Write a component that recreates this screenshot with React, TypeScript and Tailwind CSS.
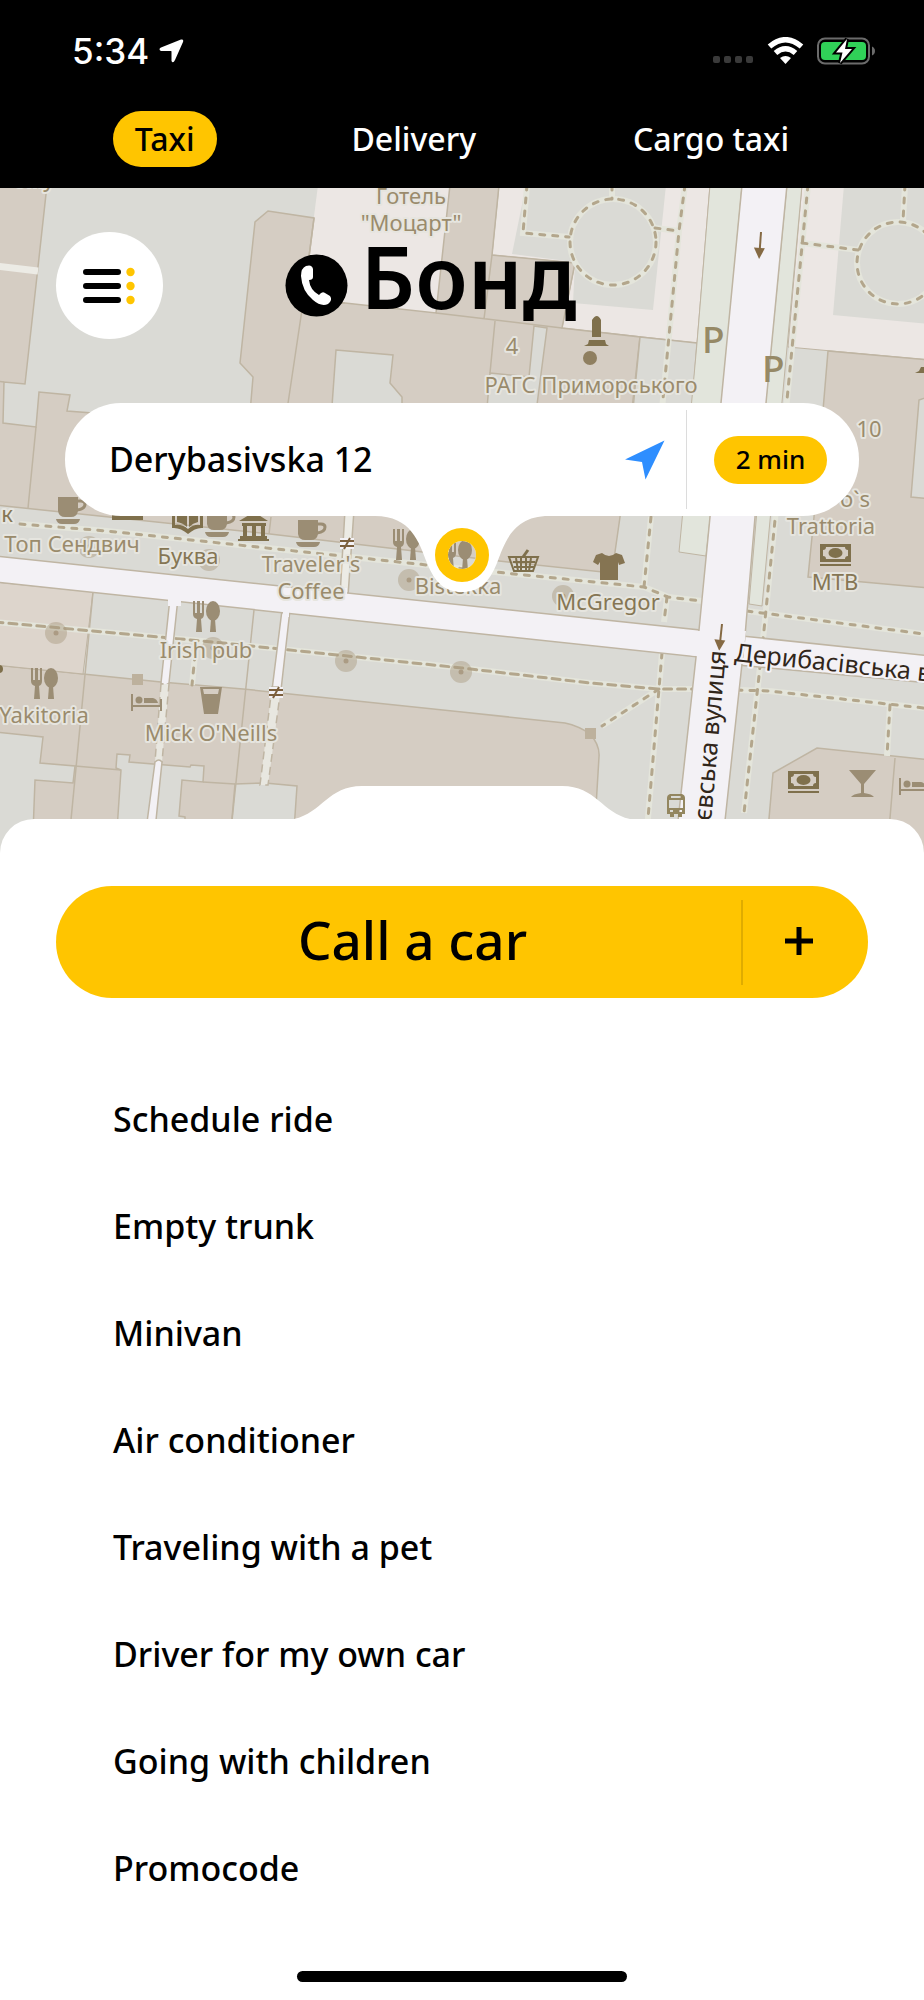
import React from 'react';

const TABS = ['Taxi', 'Delivery', 'Cargo taxi'];

const OPTIONS = [
  'Schedule ride',
  'Empty trunk',
  'Minivan',
  'Air conditioner',
  'Traveling with a pet',
  'Driver for my own car',
  'Going with children',
  'Promocode',
];

const GROUND = '#dadad5';
const BUILDING = '#d5cdc3';
const EDGE = '#bfb5a3';
const PLAZA = '#ece7e4';
const VERGE = '#e2e5dc';
const ROAD = '#f3f1f5';
const MARK = '#9b8d74';
const MARK_DARK = '#7f704c';

const BUILDINGS = [
  'M-5 185L47 185L38 267L25 384L4 382L3 423L36 427L39 392L70 395L67 411L249 425L253 377L240 363L255 222L268 211L314 218L303 303L345 303L436 313L450 185L499 185L492 255L575 263L562 328L640 337L620 517L612 573L499 561L270 534L-5 505Z',
  'M828 351L930 360V588L808 577L814 517Z',
  'M-5 665L83 674L161 682L243 689L462 712L565 723Q579 726 590 734Q600 745 599 757L594 840H-5Z',
  'M768 830L773 773L817 748L930 760V870H766Z',
];

const YARDS = [
  'M336 350L393 355L390 383L402 397V420H331Z',
  'M490 373L529 377L534 326L547 328L535 420H486Z',
  'M640 337L697 343L690 440H630Z',
  'M919 400L911 497L930 499V396Z',
  'M-5 732L43 737L40 763L75 766L73 783L35 780L32 860H-5Z',
  'M117 830L121 770L116 768L117 754L130 755L129 762L190 767L191 765L204 766L203 782L182 780L179 816L185 817V830Z',
  'M235 784L265 783L297 786L294 830H231Z',
];

const SEAMS = [
  'M36 427L28 508',
  'M4 382L-5 381',
  'M314 218L303 303L287 410',
  'M303 303L345 303',
  'M492 255L484 319M436 313L562 328M495 321L490 373',
  'M271 517L269 534',
  'M93 592L70 830',
  'M254 610L231 830',
  'M75 766L121 770M203 782L235 784',
  'M895 758L889 830',
];

const PATHS = [
  'M527 185L523 233L569 237',
  'M612 185V199',
  'M655 228L679 231',
  'M685 185L679 231L661 420',
  'M808 185L786 410L764 630L744 813',
  'M802 243L858 250',
  'M905 185L903 221',
  'M20 524L107 531L427 565L495 572L644 587L668 597L702 601',
  'M651 517L644 587M667 597L664 622',
  'M747 611L924 634',
  'M659 689L602 726',
  'M662 653L647 830',
  'M737 690L769 691L924 708',
  'M890 705L887 756',
  'M195 655L192 685',
];

const DISCS = [
  [56, 633],
  [346, 661],
  [461, 672],
  [213, 648],
  [89, 547],
  [209, 560],
  [409, 580],
  [563, 596],
];

type Label = { text: string; x: number; y: number; color?: string };

const LABELS: Label[] = [
  { text: 'ому', x: 34, y: 187 },
  { text: 'Готель', x: 411, y: 204 },
  { text: '"Моцарт"', x: 411, y: 231 },
  { text: '4', x: 512, y: 354 },
  { text: 'РАГС Приморського', x: 591, y: 393 },
  { text: '10', x: 869, y: 437 },
  { text: 'o`s', x: 855, y: 507 },
  { text: 'Trattoria', x: 831, y: 534 },
  { text: 'МТВ', x: 835, y: 590, color: '#857654' },
  { text: 'McGregor', x: 608, y: 610, color: '#857654' },
  { text: 'Bistekka', x: 458, y: 594 },
  { text: 'к', x: 7, y: 522, color: '#857654' },
  { text: 'Топ Сендвич', x: 72, y: 552 },
  { text: 'Буква', x: 188, y: 564, color: '#857654' },
  { text: "Traveler's", x: 311, y: 572 },
  { text: 'Coffee', x: 311, y: 599 },
  { text: 'Irish pub', x: 206, y: 658 },
  { text: 'Yakitoria', x: 44, y: 723 },
  { text: "Mick O'Neills", x: 211, y: 741 },
];

type MarkProps = { x: number; y: number };

const Cup: React.FC<MarkProps> = ({ x, y }) => (
  <g transform={`translate(${x} ${y})`} fill={MARK}>
    <path d="M2 0H22V14Q21 20 15 20H9Q3 20 2 14Z" />
    <path d="M22 4H25Q29 4 29 7Q29 12 21 13" fill="none" stroke={MARK} strokeWidth="3" />
    <path d="M0 22H24Q23 27 18 27H6Q1 27 0 22Z" />
  </g>
);

const Cutlery: React.FC<MarkProps> = ({ x, y }) => (
  <g transform={`translate(${x} ${y})`} fill={MARK}>
    <path d="M0 0H2V12H4V0H7V12H9V0H11V13Q11 17 8 18L9 31H3L4 18Q0 17 0 13Z" />
    <ellipse cx="20" cy="10" rx="7" ry="10" />
    <path d="M18 18H22L23 31H17Z" />
  </g>
);

const Banknote: React.FC<MarkProps> = ({ x, y }) => (
  <g transform={`translate(${x} ${y})`} fill={MARK_DARK}>
    <path
      fillRule="evenodd"
      d="M0 0H31V18H0ZM6 3Q6 6 3 6V12Q6 12 6 15H25Q25 12 28 12V6Q25 6 25 3Z"
    />
    <ellipse cx="15.500" cy="9" rx="7" ry="5" />
    <path d="M0 20H31V22H0Z" />
  </g>
);

const Bed: React.FC<MarkProps> = ({ x, y }) => (
  <g transform={`translate(${x} ${y})`} fill={MARK}>
    <path d="M0 0H2V11H29V5H31V17H29V13H2V17H0Z" />
    <circle cx="8" cy="6" r="3.500" />
    <path d="M13 4H22Q26 5 27 9H13Z" />
  </g>
);

const Barrier: React.FC<MarkProps> = ({ x, y }) => (
  <g transform={`translate(${x} ${y})`}>
    <path d="M0 0H14V11H0Z" fill={ROAD} />
    <path d="M0 3H14M0 8H14M10 0L4 11" stroke="#7c5f3c" strokeWidth="2" />
  </g>
);

const OneWay: React.FC<{ at: string }> = ({ at }) => (
  <g transform={at}>
    <path d="M0 0V18" stroke="#856a43" strokeWidth="2" />
    <path d="M-6 16H5L0 27Z" fill="#856a43" />
  </g>
);

const CityMap: React.FC = () => (
  <svg
    className="absolute inset-x-0 top-0 w-full h-[calc(100%+40px)]"
    viewBox="0 188 924 671"
    preserveAspectRatio="xMidYMin slice"
    aria-hidden="true"
  >
    <rect x="-10" y="180" width="950" height="700" fill={GROUND} />
    <g fill={PLAZA}>
      <path d="M318 185H450L436 313L303 303Z" />
      <path d="M499 185H710L697 343L562 328L575 263L492 255Z" stroke={EDGE} strokeWidth="1" />
      <path d="M802 185H930V360L788 347Z" stroke={EDGE} strokeWidth="1" />
    </g>
    <g fill={GROUND}>
      <path d="M526 185L512 254L575 262L573 303L653 310L666 185Z" />
      <path d="M844 185L833 315L930 324V185Z" />
    </g>
    <g fill={BUILDING} stroke={EDGE} strokeWidth="1.500">
      {BUILDINGS.map((d) => (
        <path key={d} d={d} />
      ))}
    </g>
    <path d="M-5 582L93 592L83 674L-5 665Z" fill="#ddd5cc" stroke={EDGE} />
    <g fill={GROUND} stroke={EDGE} strokeWidth="1.500">
      {YARDS.map((d) => (
        <path key={d} d={d} />
      ))}
    </g>
    <g fill="none" stroke={EDGE} strokeWidth="1.500">
      {SEAMS.map((d) => (
        <path key={d} d={d} />
      ))}
    </g>
    <g fill={VERGE} stroke={EDGE}>
      <path d="M710 185H742L722 402L720 420H690L697 343Z" />
      <path d="M787 185H802L782 402L780 420H764Z" />
      <path d="M683 510L679 552L706 556L711 510ZM757 510L749 604L762 606L771 510Z" />
    </g>

    {/* footways */}
    <g fill="none" stroke="#e4e5db" strokeWidth="6">
      <path d="M-5 266L38 271" stroke="#ecebe5" strokeWidth="7" />
      {PATHS.map((d) => (
        <path key={d} d={d} />
      ))}
      <path d="M-5 622L213 642L462 668L590 683L659 689H692" />
      <circle cx="613" cy="242" r="43" />
      <circle cx="898" cy="263" r="41" />
    </g>
    <g fill="none" stroke="#b3a68c" strokeWidth="3" strokeDasharray="5 8" strokeLinecap="round">
      {PATHS.map((d) => (
        <path key={d} d={d} />
      ))}
      <path d="M-5 622L213 642L462 668L590 683L659 689H692" strokeDasharray="8 6" />
      <circle cx="613" cy="242" r="43" />
      <circle cx="898" cy="263" r="41" />
    </g>

    {/* streets */}
    <g fill={ROAD} stroke={EDGE} strokeWidth="1.500">
      <path d="M345 510H354L348 596H340Z" fill="#ecebe5" />
      <path d="M170 598H178L169 683Q165 687 161 683Z" />
      <path d="M161 684L155 762H162L169 684Z" fill="#e8e7e0" strokeDasharray="8 5" />
      <path d="M155 762Q159 758 162 762L155 830H146Z" />
      <path d="M282 610H290L281 690H272Z" />
      <path d="M272 687L260 785H268L281 687Z" fill="#e8e7e0" strokeDasharray="8 5" />
      <path d="M-5 556L700 630L698 657L-5 582Z" />
      <path d="M742 636L930 656V683L738 665Z" />
      <path d="M742 185H787L755 517L745 636L724 830H677L699 630L710 517Z" />
    </g>
    <path d="M690 631H746L742 664L690 655ZM168 596H181V606H168ZM283 606H289V617H283ZM342 588H347V597H342Z" fill={ROAD} />

    {DISCS.map(([cx, cy]) => (
      <g key={`${cx}-${cy}`} fill="#a8987f">
        <circle cx={cx} cy={cy} r="11" opacity="0.45" />
        <circle cx={cx} cy={cy} r="2.500" opacity="0.9" />
      </g>
    ))}
    <path d="M132 674H143V685H132ZM585 728H596V739H585Z" fill="#bdb19d" />
    <circle cx="590" cy="358" r="7" fill="#8f7f60" />
    <circle cx="-1" cy="669" r="4" fill={MARK_DARK} />

    <Cup x={56} y={497} />
    <Cup x={205} y={510} />
    <Cup x={296} y={520} />
    <Cutlery x={193} y={601} />
    <Cutlery x={393} y={529} />
    <Cutlery x={31} y={668} />
    <Cutlery x={445} y={540} />
    <Banknote x={820} y={544} />
    <Banknote x={788} y={771} />
    <Bed x={131} y={694} />
    <Bed x={899} y={778} />
    <Barrier x={340} y={538} />
    <Barrier x={269} y={687} />
    <OneWay at="translate(761 232) rotate(4)" />
    <OneWay at="translate(722 624) rotate(6)" />

    <path d="M112 515H143V520H112Z" fill={MARK_DARK} />
    {/* bookshop */}
    <path
      d="M172 505V528Q180 527 188 534Q196 527 203 528V505L200 504V525Q194 524 188 529Q182 524 175 525V504Z"
      fill={MARK_DARK}
    />
    <path d="M177 505L187 510V527Q183 523 177 522ZM198 505L189 510V527Q193 523 198 522Z" fill={MARK_DARK} />
    {/* museum */}
    <path
      d="M239 521L254 512L268 521ZM242 523H266V526H242ZM243 526H247V536H243ZM252 526H256V536H252ZM261 526H265V536H261ZM240 536H267V539H240ZM238 539H269V541H238Z"
      fill={MARK_DARK}
    />
    {/* grocery */}
    <g fill="none" stroke={MARK_DARK} strokeWidth="2">
      <path d="M509 557H538L533 571H514ZM513 562H535M514 567H534M516 558L518 571M521 558V571M526 558V571M531 558L529 571" />
      <path d="M523 557L528 550" strokeWidth="3" />
    </g>
    {/* clothes */}
    <path
      d="M602 553Q609 559 616 553L622 555L625 563L619 565L618 562V580H600V562L598 565L593 562L596 555Z"
      fill="#857452"
    />
    {/* beer */}
    <path fillRule="evenodd" d="M200 687H222L218 714H204ZM203 689L204 694H218L219 689Z" fill={MARK} />
    {/* bar */}
    <path d="M849 770H876L864 784V793Q872 794 874 797H851Q853 794 861 793V784Z" fill={MARK} />
    {/* bus stop */}
    <path
      fillRule="evenodd"
      d="M670 794H682Q685 795 685 798V814H682V817H678V814H674V817H670V814H667V798Q667 795 670 794ZM671 796V798H681V796ZM669 800V808H683V800ZM670 810V812H673V810ZM679 810V812H682V810Z"
      fill="#93865f"
    />
    {/* monument */}
    <path
      d="M592 320Q597 312 601 320V337H592ZM589 340H605L606 344L609 346H584L588 344ZM921 367H930V373H915L919 371Z"
      fill={MARK_DARK}
    />

    <g fontFamily="'Noto Sans', sans-serif" fontWeight="400" strokeLinejoin="round" paintOrder="stroke">
      <g fontSize="22" textAnchor="middle" stroke="#e6e5df" strokeWidth="4">
        {LABELS.map((label) => (
          <text key={label.text} x={label.x} y={label.y} fill={label.color ?? '#9a8b6c'}>
            {label.text}
          </text>
        ))}
      </g>
      <g fontSize="37" fontWeight="500" fill="#968966">
        <text x="702" y="353">P</text>
        <text x="762" y="382">P</text>
      </g>
      <g fontSize="25" fill="#31261a" stroke={ROAD} strokeWidth="4">
        <text transform="translate(734 661) rotate(6)">Дерибасівська вулиця</text>
        <text transform="translate(726 651) rotate(-85)" textAnchor="end">
          Рішельєвська вулиця
        </text>
      </g>
    </g>
  </svg>
);

const StatusBar: React.FC = () => (
  <div className="flex items-center justify-between pl-[72px] pr-12 pt-[30px] pb-[39px]">
    <div className="flex items-center gap-2.5">
      <span className="font-['Inter',sans-serif] font-medium text-[35px] leading-[42px]">5:34</span>
      <svg width="25" height="24" viewBox="0 0 25 24" fill="currentColor" aria-hidden="true">
        <path d="M22 .5Q25 0 24 3L16 21Q14 25 12.500 22V12.500Q12.500 12 12 12H2Q-1 10 2 8.500Z" />
      </svg>
    </div>
    <svg width="164" height="28" viewBox="0 0 164 28" aria-hidden="true">
      <g fill="#3a3a3a">
        <rect x="1" y="19" width="7" height="7" rx="2" />
        <rect x="12" y="19" width="7" height="7" rx="2" />
        <rect x="23" y="19" width="7" height="7" rx="2" />
        <rect x="34" y="19" width="7" height="7" rx="2" />
      </g>
      <g fill="none" stroke="#fff" strokeWidth="5.500">
        <path d="M57.500 9.500Q73.500 -4 89.500 9.500" />
        <path d="M63.500 16Q73.500 7.500 83.500 16" />
      </g>
      <path d="M68 21Q73.500 17 79 21L73.500 27Z" fill="#fff" />
      <rect x="106" y="1.500" width="51" height="25" rx="7" fill="none" stroke="#6b6b6b" strokeWidth="2" />
      <rect x="109" y="5" width="45" height="18" rx="4" fill="#30d158" />
      <path d="M160 9.500Q163 11 163 14T160 18.500Z" fill="#6b6b6b" />
      <path
        d="M135 2L124 15.500H130.500L128 26L140 12H133Z"
        fill="#fff"
        stroke="#000"
        strokeWidth="4"
        paintOrder="stroke"
      />
    </svg>
  </div>
);

const Tabs: React.FC = () => (
  <nav className="flex items-center justify-evenly pb-[21px]">
    {TABS.map((tab, index) => (
      <button
        key={tab}
        type="button"
        className={
          index === 0
            ? 'h-14 px-[22px] rounded-full bg-[#ffc500] text-black text-[32px]'
            : 'h-14 px-[22px] rounded-full text-white text-[32px]'
        }
      >
        {tab}
      </button>
    ))}
  </nav>
);

const AddressCard: React.FC = () => (
  <div className="relative mx-[65px] mt-16 h-[113px] flex items-center rounded-[56px] bg-white">
    <input
      type="text"
      aria-label="Pickup address"
      defaultValue="Derybasivska 12"
      className="flex-1 min-w-0 pl-11 text-[34px] text-black bg-transparent outline-none"
    />
    <button type="button" aria-label="Use my location" className="mr-[21px]">
      <svg width="40" height="40" viewBox="0 0 40 40" aria-hidden="true">
        <path d="M39.500 .5L0 19.500L17 22L20.500 39.500Z" fill="#2e8eff" />
      </svg>
    </button>
    <div className="w-px h-[99px] bg-[#dcdcdc]"></div>
    <button type="button" className="mx-[27px] mr-8 w-[113px] h-12 rounded-full bg-[#ffc500] text-[26px]">
      2 min
    </button>

    <svg
      className="absolute left-1/2 top-full -translate-x-1/2 -mt-px"
      width="174"
      height="78"
      viewBox="0 0 174 78"
      aria-hidden="true"
    >
      <path
        fillRule="evenodd"
        d="M0 0H174V1C138 1 130 27 122 48C114 68 104 77 87 77S60 68 52 48C44 27 36 1 0 1ZM87 26A14 14 0 1 0 87 54A14 14 0 1 0 87 26Z"
        fill="#fff"
      />
      <circle cx="87" cy="40" r="20.500" fill="none" stroke="#ffc500" strokeWidth="13" />
    </svg>
  </div>
);

const Logo: React.FC = () => (
  <div className="flex items-center justify-center gap-3 mr-[62px]">
    <svg width="63" height="63" viewBox="0 0 63 63" aria-hidden="true">
      <circle cx="31.500" cy="31.500" r="31" />
      <path
        d="M21 12Q27 10 28 15V23Q28 26 24 26Q25 36 34 41Q37 37 40 39L45 42Q48 46 43 50Q36 53 28 46Q17 37 16 22Q16 14 21 12Z"
        fill="#fff"
      />
    </svg>
    <span className="pb-5 font-semibold text-[86px] leading-[87px]">Бонд</span>
  </div>
);

const MapSection: React.FC = () => (
  <section className="relative pt-11 pb-[303px]">
    <CityMap />
    <div className="relative px-14 grid grid-cols-[107px_1fr_107px] items-center">
      <button
        type="button"
        aria-label="Menu"
        className="size-[107px] rounded-full bg-white flex items-center justify-center"
      >
        <svg width="54" height="38" viewBox="0 0 54 38" aria-hidden="true">
          <path d="M3 5H35M3 19H35M3 33H35" stroke="#000" strokeWidth="6" strokeLinecap="round" />
          <g fill="#ffc500">
            <circle cx="47.500" cy="5" r="4.200" />
            <circle cx="47.500" cy="19" r="4.200" />
            <circle cx="47.500" cy="33" r="4.200" />
          </g>
        </svg>
      </button>
      <Logo />
    </div>
    <AddressCard />
  </section>
);

const OrderSheet: React.FC = () => (
  <main className="relative rounded-t-[34px] bg-white pt-[67px]">
    <svg
      className="absolute left-1/2 bottom-full -translate-x-1/2"
      width="336"
      height="33"
      viewBox="0 0 336 33"
      aria-hidden="true"
    >
      <path d="M0 33C28 27 34 0 68 0H268C302 0 308 27 336 33Z" fill="#fff" />
    </svg>

    <div className="mx-14 h-[112px] flex items-center rounded-full bg-[#ffc500]">
      <button type="button" className="flex-1 h-full pl-7 pb-1 text-[53px]">
        Call a car
      </button>
      <div className="w-0.5 h-[85px] bg-[#dfac00]"></div>
      <button
        type="button"
        aria-label="Add option"
        className="w-[125px] h-full pr-3.5 pb-0.5 flex items-center justify-center"
      >
        <svg width="28" height="28" viewBox="0 0 28 28" aria-hidden="true">
          <path d="M14 0V28M0 14H28" stroke="#000" strokeWidth="5" />
        </svg>
      </button>
    </div>

    <ul className="mt-[68px]">
      {OPTIONS.map((option) => (
        <li key={option}>
          <button type="button" className="w-full h-[107px] px-[113px] text-left text-[34px]">
            {option}
          </button>
        </li>
      ))}
    </ul>

    <div className="mt-[49px] mb-[18px] mx-auto w-[330px] h-[11px] rounded-full bg-black"></div>
  </main>
);

export default function App() {
  return (
    <div className="overflow-hidden bg-white text-black font-medium font-['Noto_Sans',sans-serif]">
      <header className="bg-black text-white">
        <StatusBar />
        <Tabs />
      </header>
      <MapSection />
      <OrderSheet />
    </div>
  );
}
